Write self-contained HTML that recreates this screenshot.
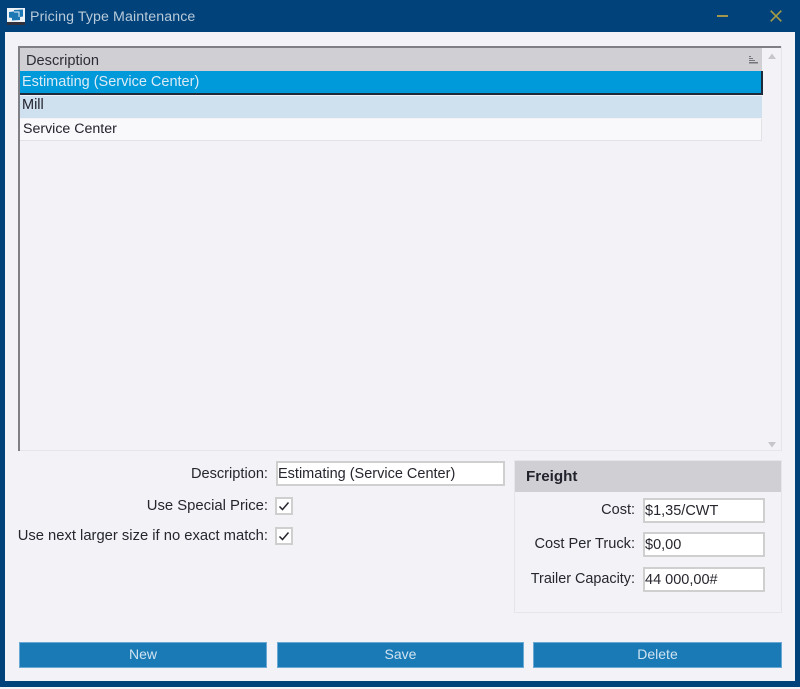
<!DOCTYPE html>
<html>
<head>
<meta charset="utf-8">
<style>
html,body{margin:0;padding:0;}
body{width:800px;height:689px;position:relative;overflow:hidden;background:#01427a;font-family:"Liberation Sans",sans-serif;font-size:14.5px;color:#26262e;}
.a{position:absolute;white-space:nowrap;}
.lbl{position:absolute;text-align:right;white-space:nowrap;line-height:18px;}
.inp{position:absolute;box-sizing:border-box;background:#fff;border:2px solid #cfcfcf;height:25px;line-height:22px;padding-left:0;white-space:nowrap;}
.chk{position:absolute;box-sizing:border-box;width:18px;height:18px;background:#fff;border:2px solid #cfcfcf;}
.btn{position:absolute;box-sizing:border-box;top:642px;height:26px;background:#1a7ab6;border:1px solid #6aa9d3;color:#cfe3f1;text-align:center;line-height:23px;font-size:14px;}
</style>
</head>
<body>
<svg class="a" style="left:7px;top:8px" width="18" height="17" viewBox="0 0 18 17">
<rect x="0" y="0" width="18" height="14" fill="#eef3f8"/>
<path d="M2 4l5-.5V2l9-.5v7l-3 .5v3l-8 .5V10L2 9.500z" fill="#1e78b4"/>
<path d="M7 4h5v5" stroke="#e6f0f7" stroke-width="1" fill="none"/>
<rect x="0" y="14" width="18" height="3" fill="#33323c"/>
</svg>
<div class="a" style="left:30px;top:8px;color:#b9cad9;line-height:18px;font-size:14.2px;letter-spacing:.1px">Pricing Type Maintenance</div>
<div class="a" style="left:717px;top:15px;width:11px;height:2px;background:#a3964a"></div>
<svg class="a" style="left:770px;top:10px" width="12" height="12" viewBox="0 0 12 12"><path d="M.7 .7L11.300 11.300M11.300 .7L.7 11.300" stroke="#a69a45" stroke-width="1.700" fill="none"/></svg>

<div class="a" style="left:5px;top:32px;width:790px;height:649px;background:#f2f2f7"></div>
<div class="a" style="left:0;top:687px;width:800px;height:2px;background:#f4f4f8"></div>

<!-- grid -->
<div class="a" style="left:18px;top:46px;width:764px;height:405px;box-sizing:border-box;border:1px solid #e6e6ea;background:#f2f2f7"></div>
<div class="a" style="left:18px;top:46px;width:2px;height:405px;background:#7f7f85"></div>
<div class="a" style="left:18px;top:46px;width:763px;height:2px;background:#7f7f85"></div>
<div class="a" style="left:20px;top:48px;width:742px;height:23px;background:#cfcfd4"></div>
<div class="a" style="left:26px;top:52px;line-height:18px;color:#2c2c36;font-size:14.6px">Description</div>
<svg class="a" style="left:748px;top:55px" width="11" height="10" viewBox="0 0 11 10"><path d="M1 1h2v1H1zM1 3h4v1H1zM1 5h6v1H1zM1 7h9v1.500H1z" fill="#74747c"/></svg>
<div class="a" style="left:20px;top:71px;width:743px;height:24px;box-sizing:border-box;background:#0099d9;border-right:2px solid #1d2b3a;border-bottom:2px solid #1d2b3a"></div>
<div class="a" style="left:22px;top:73px;line-height:18px;color:#dcebf6">Estimating (Service Center)</div>
<div class="a" style="left:20px;top:96px;width:742px;height:22px;background:#cfe1ef"></div>
<div class="a" style="left:22px;top:96px;line-height:18px;color:#22222c">Mill</div>
<div class="a" style="left:20px;top:119px;width:742px;height:22px;box-sizing:border-box;background:#f9f9fb;border-bottom:1px solid #e2e2e6;border-right:1px solid #e2e2e6"></div>
<div class="a" style="left:23px;top:120px;line-height:18px;color:#22222c;font-size:14.2px">Service Center</div>
<svg class="a" style="left:767px;top:53px" width="10" height="7" viewBox="0 0 10 7"><path d="M5 .5L9 6H1z" fill="#c6c6cb"/></svg>
<svg class="a" style="left:767px;top:441px" width="10" height="7" viewBox="0 0 10 7"><path d="M1 1H9L5 6.500z" fill="#c6c6cb"/></svg>

<!-- form -->
<div class="lbl" style="right:532px;top:465px;font-size:14.6px">Description:</div>
<div class="inp" style="left:276px;top:461px;width:229px">Estimating (Service Center)</div>
<div class="lbl" style="right:532px;top:497px;font-size:14.85px">Use Special Price:</div>
<div class="chk" style="left:275px;top:497px"><svg width="14" height="14" viewBox="0 0 14 14" style="display:block"><path d="M2.500 7.500L5.500 10.500L11.500 3.500" stroke="#26262e" stroke-width="1.500" fill="none"/></svg></div>
<div class="lbl" style="right:532px;top:527px;font-size:14.77px">Use next larger size if no exact match:</div>
<div class="chk" style="left:275px;top:527px"><svg width="14" height="14" viewBox="0 0 14 14" style="display:block"><path d="M2.500 7.500L5.500 10.500L11.500 3.500" stroke="#26262e" stroke-width="1.500" fill="none"/></svg></div>

<!-- freight -->
<div class="a" style="left:514px;top:460px;width:268px;height:153px;box-sizing:border-box;border:1px solid #e6e6ea;background:#f2f2f7"></div>
<div class="a" style="left:515px;top:461px;width:266px;height:31px;background:#cfcfd4"></div>
<div class="a" style="left:526px;top:468px;line-height:18px;font-weight:bold;color:#22222c;font-size:15.2px">Freight</div>
<div class="lbl" style="right:165px;top:501px">Cost:</div>
<div class="inp" style="left:643px;top:498px;width:122px">$1,35/CWT</div>
<div class="lbl" style="right:165px;top:535px;font-size:14.6px">Cost Per Truck:</div>
<div class="inp" style="left:643px;top:532px;width:122px">$0,00</div>
<div class="lbl" style="right:165px;top:570px;font-size:14.4px">Trailer Capacity:</div>
<div class="inp" style="left:643px;top:567px;width:122px">44 000,00#</div>

<!-- buttons -->
<div class="btn" style="left:19px;width:248px">New</div>
<div class="btn" style="left:277px;width:247px">Save</div>
<div class="btn" style="left:533px;width:249px">Delete</div>
</body>
</html>
